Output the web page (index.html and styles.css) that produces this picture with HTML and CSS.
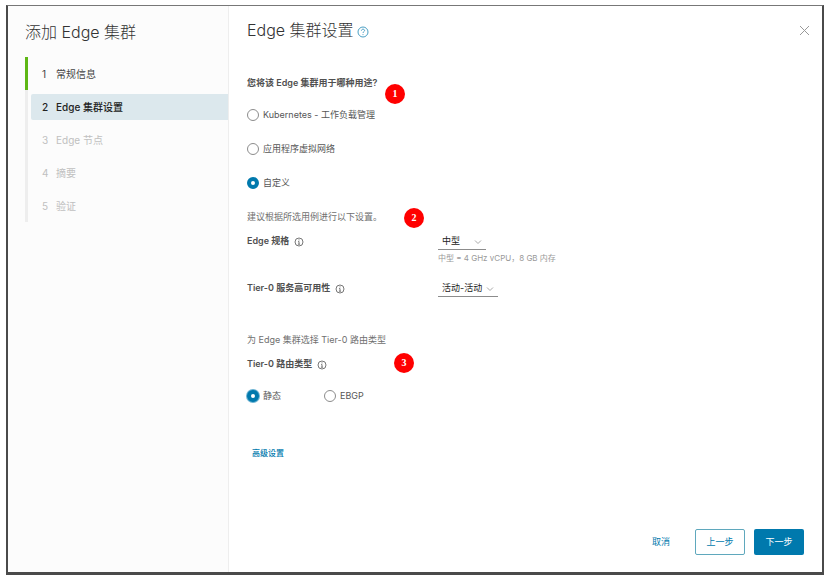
FILE: index.html
```html
<!DOCTYPE html>
<html lang="zh-CN">
<head>
    <meta charset="UTF-8">
    <meta name="viewport" content="width=device-width, initial-scale=1.0">
    <title>添加 Edge 集群</title>
    <link rel="stylesheet" href="styles.css">
</head>
<body>
    <div class="wizard">
        <aside class="sidebar">
            <h1>添加 Edge 集群</h1>
            <ol class="steps">
                <li class="done"><a href="#"><span class="num">1</span>常规信息</a></li>
                <li class="current"><a href="#" aria-current="step"><span class="num">2</span>Edge 集群设置</a></li>
                <li><a href="#"><span class="num">3</span>Edge 节点</a></li>
                <li><a href="#"><span class="num">4</span>摘要</a></li>
                <li><a href="#"><span class="num">5</span>验证</a></li>
            </ol>
        </aside>
        <main class="page">
            <header class="page-header">
                <h2>Edge 集群设置
                    <svg class="help" viewBox="0 0 12 12"><circle cx="6" cy="6" r="5"/><path d="M4.4 4.7C4.5 3.7 5.2 3.2 6 3.2c.9 0 1.6.5 1.6 1.3 0 1.1-1.6 1.2-1.6 2.5M6 8.2v.9"/></svg>
                </h2>
                <button type="button" class="close" aria-label="关闭">
                    <svg viewBox="0 0 16 16"><path d="M4 4l9 9M13 4l-9 9"/></svg>
                </button>
            </header>

            <form id="edge-form">
                <section class="usage">
                    <p class="label" id="usage-label">您将该 Edge 集群用于哪种用途?</p>
                    <span class="marker marker-1">1</span>
                    <div class="radio-list" role="radiogroup" aria-labelledby="usage-label">
                        <label class="radio"><input type="radio" name="usage">Kubernetes - 工作负载管理</label>
                        <label class="radio"><input type="radio" name="usage">应用程序虚拟网络</label>
                        <label class="radio"><input type="radio" name="usage" checked>自定义</label>
                    </div>
                </section>

                <section class="settings">
                    <p class="note">建议根据所选用例进行以下设置。</p>
                    <span class="marker marker-2">2</span>
                    <div class="field">
                        <label class="label" for="size">Edge 规格
                            <svg class="info" viewBox="0 0 10 10"><circle cx="5" cy="5" r="4"/><path d="M5 2.4v1M4.2 4.5H5v2.7M3.9 7.2h2.2"/></svg>
                        </label>
                        <div>
                            <div class="select">
                                <select id="size" class="narrow"><option>中型</option></select>
                                <svg viewBox="0 0 8 8"><path d="M1 2.5l3 3 3-3"/></svg>
                            </div>
                            <p class="helper">中型 = 4 GHz vCPU，8 GB 内存</p>
                        </div>
                    </div>
                    <div class="field">
                        <label class="label" for="ha">Tier-0 服务高可用性
                            <svg class="info" viewBox="0 0 10 10"><circle cx="5" cy="5" r="4"/><path d="M5 2.4v1M4.2 4.5H5v2.7M3.9 7.2h2.2"/></svg>
                        </label>
                        <div class="select">
                            <select id="ha"><option>活动-活动</option></select>
                            <svg viewBox="0 0 8 8"><path d="M1 2.5l3 3 3-3"/></svg>
                        </div>
                    </div>
                </section>

                <section class="routing">
                    <p class="note">为 Edge 集群选择 Tier-0 路由类型</p>
                    <p class="label" id="routing-label">Tier-0 路由类型
                        <svg class="info" viewBox="0 0 10 10"><circle cx="5" cy="5" r="4"/><path d="M5 2.4v1M4.2 4.5H5v2.7M3.9 7.2h2.2"/></svg>
                    </p>
                    <span class="marker marker-3">3</span>
                    <div class="radio-row" role="radiogroup" aria-labelledby="routing-label">
                        <label class="radio active"><input type="radio" name="routing" checked>静态</label>
                        <label class="radio"><input type="radio" name="routing">EBGP</label>
                    </div>
                </section>

                <a href="#" class="advanced">高级设置</a>
            </form>

            <footer class="actions">
                <button type="button" class="btn btn-link">取消</button>
                <button type="button" class="btn btn-outline">上一步</button>
                <button type="submit" form="edge-form" class="btn btn-primary">下一步</button>
            </footer>
        </main>
    </div>
</body>
</html>
```
FILE: styles.css
```css
* {
    box-sizing: border-box;
}
body {
    margin: 0;
    padding: 5px 6px;
    min-height: 100vh;
    display: flex;
    background: #fff;
    color: #565656;
    font-family: Inter, "Noto Sans CJK SC", sans-serif;
    font-size: 9px;
    line-height: 16px;
}
h1, h2, p, ol {
    margin: 0;
    padding: 0;
}
h1, h2 {
    font-size: 16px;
    line-height: 24px;
    font-weight: 300;
    color: #333;
}
svg {
    fill: none;
    stroke: currentColor;
}
button, select {
    font: inherit;
    cursor: pointer;
}
.wizard {
    flex: 1;
    display: flex;
    border: 2px solid #4a4a4a;
    border-top: 1px solid #777;
    border-bottom: 3px solid #4a4a4a;
}

/* Step list */
.sidebar {
    width: 221px;
    flex-shrink: 0;
    padding: 14px 0 0 17px;
    background: #fcfcfc;
    border-right: 1px solid #eee;
}
.steps {
    list-style: none;
    margin-top: 13px;
    font-size: 10px;
}
.steps li {
    height: 33px;
    padding: 4px 0 3px 3px;
    border-left: 3px solid #eee;
}
.steps li.done {
    border-color: #5eb715;
}
.steps a {
    display: flex;
    align-items: center;
    height: 26px;
    padding-left: 11px;
    border-radius: 2px 0 0 2px;
    color: #c0c0c0;
    text-decoration: none;
}
.steps .num {
    width: 14px;
}
.steps .done a {
    color: #444;
}
.steps .current a {
    background: #dce8ed;
    color: #222;
    font-weight: 500;
}

/* Page */
.page {
    flex: 1;
    display: flex;
    flex-direction: column;
}
.page-header {
    display: flex;
    justify-content: space-between;
    align-items: center;
    padding: 12px 10px 0 18px;
}
.help {
    width: 12px;
    height: 12px;
    margin-left: -1px;
    vertical-align: -2px;
    color: #4a9fc4;
}
.close {
    width: 16px;
    height: 16px;
    padding: 0;
    border: none;
    background: none;
    color: #999;
}
.close svg {
    display: block;
}
form {
    padding: 33px 18px 0;
}
section {
    position: relative;
}
.label {
    font-weight: 600;
    color: #505050;
}
.note {
    color: #707070;
    margin-bottom: 8px;
}
.info {
    width: 10px;
    height: 10px;
    margin-left: 2px;
    vertical-align: -3px;
    color: #777;
}
.radio-list {
    display: flex;
    flex-direction: column;
    align-items: flex-start;
    gap: 18px;
    margin-top: 16px;
}
.radio-row {
    display: grid;
    grid-template-columns: 77px auto;
    justify-content: start;
    margin-top: 16px;
}
.radio {
    display: flex;
    align-items: center;
    gap: 4px;
}
.radio input {
    appearance: none;
    width: 12px;
    height: 12px;
    margin: 0;
    border: 1px solid #8c8c8c;
    border-radius: 50%;
    background: #fff;
}
.radio input:checked {
    border: 4px solid #0079ad;
}
.radio.active input {
    box-shadow: 0 0 0 1px #6bb3d3;
}
.settings {
    margin-top: 18px;
}
.field {
    display: grid;
    grid-template-columns: 191px 1fr;
    align-items: start;
}
.field + .field {
    margin-top: 14px;
}
.select {
    position: relative;
    width: fit-content;
}
.select select {
    display: block;
    appearance: none;
    width: 60px;
    height: 17px;
    padding: 0 0 0 4px;
    border: none;
    border-bottom: 1px solid #8c8c8c;
    border-radius: 0;
    background: none;
    color: #222;
}
.select select.narrow {
    width: 48px;
}
.select svg {
    position: absolute;
    right: 4px;
    top: 5px;
    width: 8px;
    height: 8px;
    color: #aaa;
    pointer-events: none;
}
.helper {
    font-size: 8px;
    color: #999;
}
.routing {
    margin-top: 35px;
}
.advanced {
    display: inline-block;
    margin: 41px 0 0 5px;
    font-size: 8px;
    font-weight: 500;
    color: #0079ad;
    text-decoration: none;
}

/* Numbered callouts */
.marker {
    position: absolute;
    width: 20px;
    height: 20px;
    border-radius: 50%;
    background: #f00;
    color: #fff;
    font: bold 10px/20px "Liberation Serif", serif;
    text-align: center;
}
.marker-1 {
    left: 138px;
    top: 9px;
}
.marker-2 {
    left: 157px;
    top: -1px;
}
.marker-3 {
    left: 147px;
    top: 21px;
}

/* Footer */
.actions {
    display: flex;
    justify-content: flex-end;
    gap: 9px;
    margin-top: auto;
    padding: 0 18px 17px;
}
.btn {
    width: 50px;
    height: 26px;
    padding: 0;
    border: 1px solid transparent;
    border-radius: 2px;
    background: none;
    color: #0079ad;
}
.btn-outline {
    border-color: #5fa8bd;
}
.btn-primary {
    background: #0079ad;
    color: #fff;
}
```
